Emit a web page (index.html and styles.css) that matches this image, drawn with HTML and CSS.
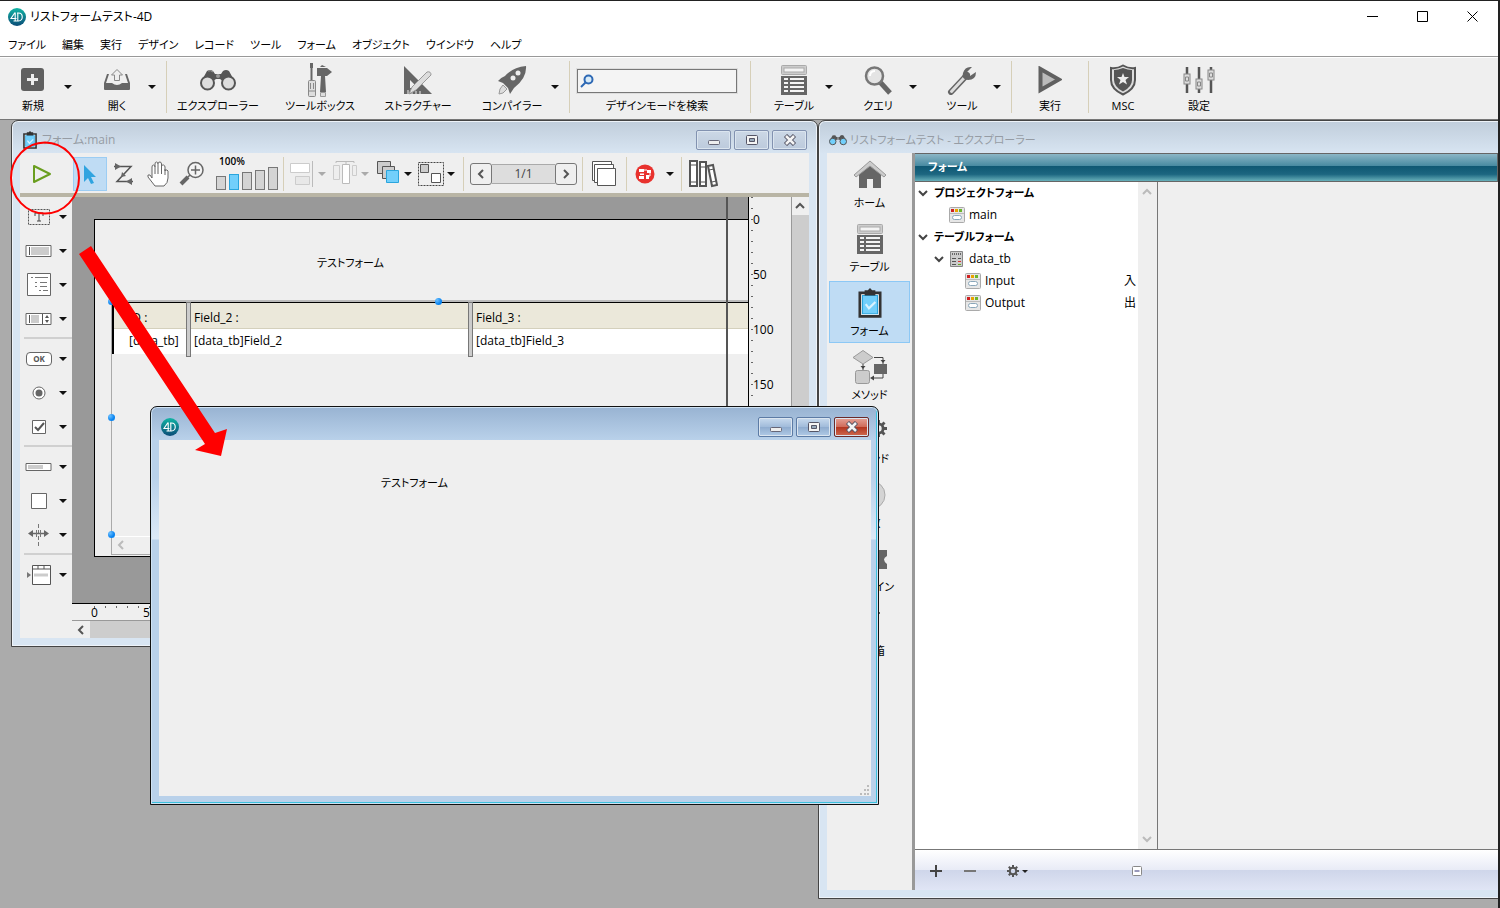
FILE: index.html
```html
<!DOCTYPE html>
<html lang="ja">
<head>
    <meta charset="UTF-8">
    <title>リストフォームテスト-4D</title>
    <link rel="stylesheet" href="styles.css">
</head>
<body>
<!-- 共通アイコン -->
<svg class="defs" width="0" height="0">
    <linearGradient id="logoFill" x1="0" y1="0" x2="0" y2="1"><stop offset="0" stop-color="#11b5a4"/><stop offset="1" stop-color="#0b4c78"/></linearGradient>
    <symbol id="logo" viewBox="0 0 18 18">
        <circle cx="9" cy="9" r="9" fill="url(#logoFill)"/>
        <path d="M7 4.500L3 10.500h5.500M7.200 4.500v8.500M5.500 13h5c5 0 5-8 0-8h-1.500M9.800 5v8" fill="none" stroke="#fff" stroke-width="1.100"/>
    </symbol>
    <symbol id="table" viewBox="0 0 28 32">
        <rect x="1.500" y="1.500" width="25" height="9" rx="1" fill="#ccc" stroke="#aaa"/><rect x="4" y="4" width="20" height="4" fill="#f4f4f4" stroke="#aaa"/>
        <path d="M1 12h26v19H1z" fill="#666"/>
        <path d="M4 15h4M10 15h14M4 19h4M10 19h14M4 23h4M10 23h14M4 27h4M10 27h14" stroke="#f4f4f4" stroke-width="2"/>
    </symbol>
    <symbol id="clip" viewBox="0 0 22 28">
        <path d="M1.500 4.500h19v22h-19z" fill="#fff" stroke="#333" stroke-width="2.500"/><path d="M4 7h14v17H4z" fill="#72cffb" stroke="#2aa5dd"/>
        <path d="M6 2h3l2-2 2 2h3v5H6z" fill="#333"/><path d="M7 15l3 4 6-6" fill="none" stroke="#d8f2ff" stroke-width="2"/>
    </symbol>
    <symbol id="bino" viewBox="0 0 36 22">
        <path d="M1 13L7 2q3-2 6 0l2 3h6l2-3q3-2 6 0l6 11-8 2-7-5h-4l-7 5z" fill="#555"/>
        <path d="M8 2q3-1 5 1" stroke="#999" fill="none"/><circle cx="18" cy="7" r="2" fill="#999"/>
        <circle cx="7.500" cy="14" r="6.500" class="lens"/><circle cx="28.500" cy="14" r="6.500" class="lens"/>
    </symbol>
    <symbol id="formIcon" viewBox="0 0 16 16">
        <rect x=".5" y=".5" width="15" height="15" rx="1" fill="#e6e6e6" stroke="#aaa"/>
        <path d="M2 2h3v3H2z" fill="#d02020"/><path d="M6 2h3v3H6z" fill="#e8a300"/><path d="M10 2h3v3h-3z" fill="#6bb52c"/>
        <path d="M1 6.500h14" stroke="#bbb"/><rect x="3.500" y="8.500" width="9" height="4" rx="2" fill="#fff" stroke="#8aa7ba"/>
    </symbol>
    <symbol id="gear" viewBox="0 0 24 24">
        <circle cx="12" cy="12" r="6.500" fill="none" stroke="#555" stroke-width="4"/>
        <path d="M12 0v5M12 19v5M0 12h5M19 12h5M3.500 3.500L7 7M17 17l3.500 3.500M3.500 20.500L7 17M17 7l3.500-3.500" stroke="#555" stroke-width="4"/>
    </symbol>
    <symbol id="wMin" viewBox="0 0 14 12"><rect x="1.500" y="6.500" width="11" height="4" rx="1" fill="#eee" stroke="#667"/></symbol>
    <symbol id="wMax" viewBox="0 0 14 12"><rect x="1.500" y="1.500" width="11" height="9" rx="1" fill="#f4f4f4" stroke="#556"/><path d="M4.500 4.500h5v3h-5z" fill="#9ab" stroke="#556"/></symbol>
    <symbol id="wClose" viewBox="0 0 14 12"><path d="M2.500 1.500l9 9M11.500 1.500l-9 9" stroke="#556" stroke-width="4.500"/><path d="M3 2l8 8M11 2l-8 8" stroke="#f4f4f4" stroke-width="2.500"/></symbol>
    <symbol id="chevL" viewBox="0 0 10 12"><path d="M7 2L3 6l4 4" fill="none" stroke="currentColor" stroke-width="2"/></symbol>
    <symbol id="chevR" viewBox="0 0 10 12"><path d="M3 2l4 4-4 4" fill="none" stroke="currentColor" stroke-width="2"/></symbol>
    <symbol id="chevU" viewBox="0 0 12 10"><path d="M2 7l4-4 4 4" fill="none" stroke="currentColor" stroke-width="2"/></symbol>
    <symbol id="chevD" viewBox="0 0 12 10"><path d="M2 3l4 4 4-4" fill="none" stroke="currentColor" stroke-width="2"/></symbol>
</svg>

<div class="app">
    <header class="titlebar">
        <svg class="logo"><use href="#logo"/></svg>
        <span>リストフォームテスト-4D</span>
        <div class="sysBtns">
            <button aria-label="最小化"><svg width="12" height="12"><path d="M0 5.500h11" stroke="#000"/></svg></button>
            <button aria-label="最大化"><svg width="12" height="12"><path d="M.5.5h10v10H.5z" fill="none" stroke="#000"/></svg></button>
            <button aria-label="閉じる"><svg width="12" height="12"><path d="M.5.5l10 10M10.500.5l-10 10" stroke="#000"/></svg></button>
        </div>
    </header>
    <nav class="menubar">
        <button>ファイル</button><button>編集</button><button>実行</button><button>デザイン</button><button>レコード</button><button>ツール</button><button>フォーム</button><button>オブジェクト</button><button>ウインドウ</button><button>ヘルプ</button>
    </nav>

    <!-- メインツールバー -->
    <div class="toolbar">
        <div class="group first">
            <div class="split">
                <button class="tool w50"><svg width="24" height="24"><rect x="0" y="0" width="23" height="23" rx="3" fill="#606060"/><path d="M11.500 6v11M6 11.500h11" stroke="#eee" stroke-width="3"/></svg>新規</button>
                <button class="drop" aria-label="新規メニュー"></button>
            </div>
            <div class="split">
                <button class="tool w50"><svg width="28" height="24"><path d="M4 6L1 15v6q0 1 1 1h24q1 0 1-1v-6l-3-9-2 0 3 9h-6q-5 4-10 0H3l3-9z" fill="#666"/><path d="M11.500 12.500V7H8.500L14 1.500 19.500 7h-3v5.500z" fill="#eee" stroke="#888"/></svg>開く</button>
                <button class="drop" aria-label="開くメニュー"></button>
            </div>
        </div>
        <div class="group">
            <button class="tool w102"><svg width="36" height="22"><use href="#bino"/></svg>エクスプローラー</button>
            <button class="tool w102"><svg width="28" height="36"><path d="M5.500 1v18" stroke="#666" stroke-width="2"/><path d="M4 1h3v5H4z" fill="#666"/><rect x="2.500" y="18.500" width="7" height="16" rx="1" fill="#ddd" stroke="#888"/><path d="M4.500 21v6M7.500 21v6M3 29h6" stroke="#888"/><path d="M11 6h10l5 4-5 4H11z" fill="#666"/><path d="M16 3l4 2h-6z" fill="#666"/><path d="M15 14h4l1 16h-6z" fill="#666"/><path d="M14.500 30.500h5v4h-5z" fill="#ddd" stroke="#999"/></svg>ツールボックス</button>
            <button class="tool w94"><svg width="32" height="32"><path d="M2 2l28 28H2zM8 16v8h8z" fill="#666" fill-rule="evenodd"/><path d="M6 26v4M10 27v3M14 27v3M18 27v3" stroke="#eee"/><path d="M7 30l3-7L25 8q4-1 4 3L14 26z" fill="#ddd" stroke="#999"/></svg>ストラクチャー</button>
            <div class="split">
                <button class="tool w66"><svg width="30" height="30"><path d="M29 1q1 12-12 22l-4 6-2-6-5-5-5-2q2-3 7-5Q16 2 29 1z" fill="#666"/><circle cx="21" cy="8" r="2.500" fill="#eee"/><circle cx="16" cy="13" r="2.500" fill="#eee"/><path d="M6 20l4 4-4 4-4 1 1-5z" fill="#ddd" stroke="#999"/></svg>コンパイラー</button>
                <button class="drop" aria-label="コンパイラーメニュー"></button>
            </div>
        </div>
        <div class="group search">
            <div class="searchBox">
                <svg width="14" height="14"><circle cx="8.500" cy="5.500" r="4" fill="#d8ebf8" stroke="#2d68b4" stroke-width="2"/><path d="M5.500 8.500L1 13" stroke="#2d68b4" stroke-width="2"/></svg>
                <input type="search" id="q">
            </div>
            <label for="q">デザインモードを検索</label>
        </div>
        <div class="group tables">
            <div class="split">
                <button class="tool w50"><svg width="28" height="32"><use href="#table"/></svg>テーブル</button>
                <button class="drop" aria-label="テーブルメニュー"></button>
            </div>
            <div class="split">
                <button class="tool w50"><svg width="28" height="30"><path d="M16 17l10 11" stroke="#666" stroke-width="5"/><circle cx="10.500" cy="11" r="8.500" fill="#e4e4e4" stroke="#777" stroke-width="2.500"/><path d="M6 11q0-5 5-5" fill="none" stroke="#fff" stroke-width="2"/></svg>クエリ</button>
                <button class="drop" aria-label="クエリメニュー"></button>
            </div>
            <div class="split">
                <button class="tool w50"><svg width="30" height="30"><path d="M20 10L4 27" stroke="#666" stroke-width="6" stroke-linecap="round"/><path d="M17 13L4.500 26.500" stroke="#ddd" stroke-width="3" stroke-linecap="round"/><path d="M25 2l-5 5 0 3 3 1 6-4q0 8-8 8-7-1-5-7 2-7 9-6z" fill="#666"/></svg>ツール</button>
                <button class="drop" aria-label="ツールメニュー"></button>
            </div>
        </div>
        <div class="group">
            <button class="tool w76"><svg width="24" height="28"><path d="M2.500 3v21L21 13.500z" fill="#bbb" stroke="#606060" stroke-width="4"/></svg>実行</button>
        </div>
        <div class="group">
            <button class="tool w68"><svg width="28" height="32"><path d="M14 1.500q6 3.500 12 2.500v12q0 9-12 14.500Q2 25 2 16V4q6 1 12-2.500z" fill="#ddd" stroke="#555" stroke-width="2"/><path d="M14 4q5 2 9 2v10q0 7-9 11.500Q5 23 5 16V6q4 0 9-2z" fill="#555"/><path d="M14 9l1.500 4H20l-3.500 3 1.500 4.500-4-2.500-4 2.500 1.500-4.500L8 13h4.500z" fill="#eee"/></svg>MSC</button>
            <button class="tool w84"><svg width="32" height="30"><path d="M4 2v26M16 2v26M28 2v26" stroke="#555" stroke-width="2.500"/><g fill="#ddd" stroke="#888"><rect x="1" y="9" width="6" height="10"/><rect x="13" y="14" width="6" height="10"/><rect x="25" y="5" width="6" height="10"/><path d="M2.500 12h3v4h-3zM14.500 17h3v4h-3zM26.500 8h3v4h-3z"/></g></svg>設定</button>
        </div>
    </div>

    <main class="desktop">
        <!-- フォームエディタ -->
        <section class="window editor">
            <div class="winTitle">
                <svg width="14" height="18"><use href="#clip"/></svg>
                <span>フォーム:main</span>
                <div class="winBtns">
                    <button aria-label="最小化"><svg><use href="#wMin"/></svg></button>
                    <button aria-label="最大化"><svg><use href="#wMax"/></svg></button>
                    <button aria-label="閉じる"><svg><use href="#wClose"/></svg></button>
                </div>
            </div>
            <div class="editTools">
                <button class="play" aria-label="フォーム実行"><svg width="22" height="22"><path d="M3 3v16l16-8z" fill="none" stroke="#6a9e1f" stroke-width="2" stroke-linejoin="round"/></svg></button>
                <button class="on" aria-label="選択"><svg width="16" height="22"><path d="M2 2v17l4-4 3 6 3-1-3-6h5z" fill="#2fa4e0"/></svg></button>
                <button aria-label="入力順"><svg width="22" height="22"><path d="M1 3.500h17L4 18.500h16" fill="none" stroke="#555" stroke-width="1.500"/><path d="M8 3.500L2 0v7zM13 18.500l6-3.500v7zM8 14l1-5 4 4z" fill="#666"/></svg></button>
                <button aria-label="移動"><svg width="24" height="26"><path d="M6 17V6q0-2 1.500-2T9 6V3q0-2 1.500-2T12 3V2.500Q12.500.8 14 1t1.500 2v2q.5-1.500 2-1T19 6v4q.5-1.500 2-1t1 3v5q0 5-4 8H9L2 16q-1-3 2-2z" fill="#fff" stroke="#666"/><path d="M9 6v7M12 3v10M15.500 4v9M19 8v6" stroke="#666"/></svg></button>
                <button aria-label="拡大"><svg width="26" height="26"><circle cx="16.500" cy="9" r="7.500" fill="#f4f4f4" stroke="#666" stroke-width="1.500"/><path d="M12 9h9M16.500 4.500v9M11 14l-3 3" stroke="#666" stroke-width="1.500"/><path d="M9 16l-7 7" stroke="#666" stroke-width="4"/></svg></button>
                <div class="zoom">
                    <span>100%</span>
                    <div class="bars"><i class="h14"></i><i class="h16 cur"></i><i class="h18"></i><i class="h20"></i><i class="h22"></i></div>
                </div>
                <div class="set">
                    <div class="pair dim"><button aria-label="整列"><svg width="26" height="28"><path d="M1.500 3.500h19v9h-19z" fill="#fff" stroke="#ccc"/><path d="M6.500 16.500h14v8h-14z" fill="#e8e8e8" stroke="#ccc"/><path d="M23.500 1v26" stroke="#bbb"/></svg></button><button class="drop" aria-label="整列メニュー"></button></div>
                    <div class="pair dim"><button aria-label="均等配置"><svg width="26" height="28"><path d="M1.500 5.500h6v14h-6zM20.500 5.500h4v10h-4z" fill="#eee" stroke="#ccc"/><path d="M10.500 4.500h7v19h-7z" fill="#fff" stroke="#bbb"/><path d="M4 3V1.500h18V3M14 1v3" fill="none" stroke="#bbb"/></svg></button><button class="drop" aria-label="均等配置メニュー"></button></div>
                    <div class="pair"><button aria-label="重なり"><svg width="26" height="28"><g fill="#ccc" stroke="#555"><path d="M2.500 1.500h13v12h-13z"/><path d="M7.500 6.500h12v12h-12z"/></g><path d="M11.500 10.500h12v12h-12z" fill="#72cffb" stroke="#2aa5dd"/></svg></button><button class="drop" aria-label="重なりメニュー"></button></div>
                    <div class="pair"><button aria-label="グループ"><svg width="28" height="28"><path d="M1.500 2.500h25v23h-25z" fill="none" stroke="#444" stroke-dasharray="2 1"/><path d="M3.500 4.500h8v8h-8z" fill="#ccc" stroke="#555"/><path d="M14.500 13.500h9v9h-9z" fill="#fff" stroke="#555"/></svg></button><button class="drop" aria-label="グループメニュー"></button></div>
                </div>
                <div class="set pager">
                    <button aria-label="前のページ"><svg width="10" height="12"><use href="#chevL"/></svg></button>
                    <span>1/1</span>
                    <button aria-label="次のページ"><svg width="10" height="12"><use href="#chevR"/></svg></button>
                </div>
                <div class="set flat"><button class="w42" aria-label="ビュー"><svg width="26" height="28"><g fill="#fff" stroke="#555"><path d="M1.500 1.500h19v19h-19z"/><path d="M3.500 4.500h19v18h-19z"/><path d="M6.500 8.500h18v17h-18z"/></g></svg></button></div>
                <div class="set flat">
                    <div class="pair macro"><button class="w36" aria-label="マクロ"><svg width="20" height="20"><circle cx="10" cy="10" r="9.500" fill="#e8322e"/><path d="M4 5h5v3H4zM4 12h5v3H4zM12 6h4v3h-4zM5 9.500h4v1.500H5zM11 11h3v4h-3z" fill="#fff"/><path d="M9 6h3M15 9v3h-4" stroke="#fff" fill="none"/></svg></button><button class="drop" aria-label="マクロメニュー"></button></div>
                </div>
                <div class="set flat"><button class="w42" aria-label="ライブラリ"><svg width="30" height="28"><g fill="#fff" stroke="#555" stroke-width="2"><path d="M2 1h7v25H2z"/><path d="M12 2h6v24h-6z"/><path d="M20 6l5-1 4 20-5 1z"/></g><path d="M2 5h7M2 22h7M12 7h6M12 22h6M21 10l5-1M24 22l4-1" stroke="#555"/></svg></button></div>
            </div>
            <div class="editBody">
                <div class="palette">
                    <div class="palGroup">
                        <div class="palRow"><button aria-label="テキスト"><svg width="24" height="18"><path d="M1.500 1.500h21v15h-21z" fill="#eee" stroke="#555" stroke-dasharray="2 1"/><path d="M8 5h8v3M8 8V5M12 5v8M10 13h4" stroke="#444" fill="none"/></svg></button><button class="drop" aria-label="テキストメニュー"></button></div>
                        <div class="palRow"><button aria-label="入力"><svg width="28" height="14"><path d="M1 1.500h25v11H1z" fill="#fff" stroke="#666"/><path d="M6 3h18v8H6z" fill="#ccc"/><path d="M4.500 3v8" stroke="#555"/></svg></button><button class="drop" aria-label="入力メニュー"></button></div>
                        <div class="palRow"><button aria-label="リスト"><svg width="26" height="24"><path d="M1.500.5h23v22h-23z" fill="#fff" stroke="#666"/><path d="M5 4.500h2M9 4.500h13M9 9.500h2M14 9.500h7M9 13.500h2M14 13.500h7M13 17.500h2M17 17.500h5" stroke="#777"/></svg></button><button class="drop" aria-label="リストメニュー"></button></div>
                        <div class="palRow"><button aria-label="コンボ"><svg width="28" height="14"><path d="M1 1.500h25v11H1z" fill="#fff" stroke="#666"/><path d="M6 3h8v8H6z" fill="#ccc"/><path d="M4.500 3v8M17.500 2v10" stroke="#555"/><path d="M20 6h4L22 3zM20 8h4L22 11z" fill="#555"/></svg></button><button class="drop" aria-label="コンボメニュー"></button></div>
                    </div>
                    <div class="palGroup">
                        <div class="palRow"><button aria-label="ボタン"><span class="okIcon">OK</span></button><button class="drop" aria-label="ボタンメニュー"></button></div>
                        <div class="palRow"><button aria-label="ラジオ"><svg width="14" height="14"><circle cx="7" cy="7" r="6" fill="#fff" stroke="#666"/><circle cx="7" cy="7" r="3.500" fill="#666"/></svg></button><button class="drop" aria-label="ラジオメニュー"></button></div>
                        <div class="palRow"><button aria-label="チェック"><svg width="16" height="16"><path d="M1.500 1.500h13v13h-13z" fill="#fff" stroke="#666"/><path d="M4 8l3 3 6-7" fill="none" stroke="#555" stroke-width="2"/></svg></button><button class="drop" aria-label="チェックメニュー"></button></div>
                    </div>
                    <div class="palGroup">
                        <div class="palRow"><button aria-label="進捗"><svg width="28" height="10"><path d="M1 1.500h25v7H1z" fill="#fff" stroke="#666"/><path d="M3 3h15v4H3z" fill="#ccc"/></svg></button><button class="drop" aria-label="進捗メニュー"></button></div>
                        <div class="palRow"><button aria-label="図形"><svg width="16" height="16"><path d="M.5.5h15v15H.5z" fill="#fff" stroke="#666"/></svg></button><button class="drop" aria-label="図形メニュー"></button></div>
                        <div class="palRow"><button aria-label="スプリッター"><svg width="22" height="22"><path d="M10.500 0v22" stroke="#777" stroke-dasharray="4 2"/><path d="M3 9.500h16" stroke="#666" stroke-width="1.500"/><path d="M8.500 6v7M12.500 6v7" stroke="#777"/><path d="M0 9.500L5 6v7zM21 9.500L16 6v7z" fill="#666"/></svg></button><button class="drop" aria-label="スプリッターメニュー"></button></div>
                    </div>
                    <div class="palGroup">
                        <div class="palRow"><button aria-label="プラグイン"><svg width="26" height="22"><path d="M6.500 1.500h18v19h-18zM6.500 5h18M12 1v4M18 1v4" fill="#fff" stroke="#555"/><path d="M8 11h14" stroke="#ccc" stroke-width="3"/><path d="M1 8l4 3-4 3z" fill="#777"/></svg></button><button class="drop" aria-label="プラグインメニュー"></button></div>
                    </div>
                </div>
                <div class="canvasArea">
                    <div class="canvasRow">
                        <div class="canvas">
                            <div class="page">
                                <span class="formText">テストフォーム</span>
                                <div class="listbox">
                                    <table>
                                        <thead><tr><th class="cId">ID :</th><th class="c2">Field_2 :</th><th>Field_3 :</th></tr></thead>
                                        <tbody><tr><td class="cId">[data_tb]</td><td class="c2">[data_tb]Field_2</td><td>[data_tb]Field_3</td></tr></tbody>
                                    </table>
                                    <i class="colSep s1"></i><i class="colSep s2"></i>
                                    <div class="lbScroll"><svg width="10" height="12"><use href="#chevL"/></svg></div>
                                    <i class="handle p1"></i><i class="handle p2"></i><i class="handle p3"></i><i class="handle p4"></i>
                                </div>
                            </div>
                            <i class="limit"></i>
                        </div>
                        <div class="vruler"><span>0</span><span>50</span><span>100</span><span>150</span><span>200</span><span>250</span><span>300</span></div>
                        <div class="vscroll"><button aria-label="上へ"><svg width="12" height="10"><use href="#chevU"/></svg></button></div>
                    </div>
                    <div class="hruler"><span>0</span><span>50</span><span>100</span><span>150</span></div>
                    <div class="hscroll"><button aria-label="左へ"><svg width="10" height="12"><use href="#chevL"/></svg></button></div>
                </div>
            </div>
        </section>

        <!-- エクスプローラー -->
        <section class="window explorer">
            <div class="winTitle">
                <svg class="blue" width="18" height="12"><use href="#bino"/></svg>
                <span>リストフォームテスト - エクスプローラー</span>
            </div>
            <div class="exBody">
                <nav class="exNav">
                    <button><svg width="34" height="30"><path d="M6 14l11-9 11 9v14h-8v-9h-6v9H6z" fill="#666"/><path d="M1 15L17 1l16 14-2 2L17 6 3 17z" fill="#ccc" stroke="#999"/></svg>ホーム</button>
                    <button><svg width="28" height="32"><use href="#table"/></svg>テーブル</button>
                    <button class="on"><svg width="24" height="30"><use href="#clip"/></svg>フォーム</button>
                    <button><svg width="36" height="34"><path d="M11 .5L21 7.500 11 14 1 7.500z" fill="#ccc" stroke="#999"/><path d="M22 7.500h9V14M31 24v4H20M11 14v6" fill="none" stroke="#444"/><path d="M22 14h13v10H22z" fill="#666"/><rect x="3.500" y="20.500" width="14" height="13" rx="2" fill="#ccc" stroke="#999"/><path d="M18 28l4-2.500v5zM31 13l-2.500-3h5zM11 19l-2.500-3h5z" fill="#444"/></svg>メソッド</button>
                    <button><svg width="36" height="26"><path d="M1 2h18v20H1z" fill="#ccc"/><use href="#gear" x="18" y="2" width="17" height="17"/></svg>コマンド</button>
                    <button><svg width="34" height="30"><circle cx="18" cy="15" r="14" fill="#d4d4d4" stroke="#aaa"/></svg>定数</button>
                    <button><svg width="36" height="26"><path d="M4 4h9q4 5 8 0h14v6q-6 3 0 8v5H4z" fill="#666"/></svg>プラグイン</button>
                    <button><svg width="22" height="28"><path d="M3 5h16l-2 22H5z" fill="#999"/><path d="M1 4h20" stroke="#666" stroke-width="2"/></svg>ゴミ箱</button>
                </nav>
                <div class="exMain">
                    <h2>フォーム</h2>
                    <div class="exSplit">
                        <ul class="tree">
                            <li class="root"><svg width="12" height="10"><use href="#chevD"/></svg><b>プロジェクトフォーム</b></li>
                            <li class="lv1"><svg width="16" height="16"><use href="#formIcon"/></svg>main</li>
                            <li class="root"><svg width="12" height="10"><use href="#chevD"/></svg><b>テーブルフォーム</b></li>
                            <li class="tb"><svg width="12" height="10"><use href="#chevD"/></svg><svg width="16" height="16"><path d="M1.500.5h12v15h-12z" fill="#ccc" stroke="#888"/><path d="M3 3h9" stroke="#666" stroke-width="2" stroke-dasharray="1 1"/><path d="M3 7.500h4M3 10.500h4M3 13.500h4M9 7.500h3" stroke="#555"/><path d="M9 10.500h3" stroke="#d33"/><path d="M9 13.500h3" stroke="#6a2"/></svg>data_tb</li>
                            <li class="lv2"><svg width="16" height="16"><use href="#formIcon"/></svg>Input<em>入</em></li>
                            <li class="lv2"><svg width="16" height="16"><use href="#formIcon"/></svg>Output<em>出</em></li>
                        </ul>
                        <div class="treeScroll"><svg width="12" height="10"><use href="#chevU"/></svg><svg width="12" height="10"><use href="#chevD"/></svg></div>
                        <div class="preview"></div>
                    </div>
                    <div class="exFoot">
                        <button aria-label="追加"><svg width="12" height="12"><path d="M6 0v12M0 6h12" stroke="#444" stroke-width="2"/></svg></button>
                        <button aria-label="削除"><svg width="12" height="12"><path d="M0 6h12" stroke="#777" stroke-width="2"/></svg></button>
                        <button class="opt" aria-label="オプション"><svg width="12" height="12"><use href="#gear"/></svg><i></i></button>
                        <button class="fold" aria-label="プレビュー"><svg width="10" height="10"><rect x=".5" y=".5" width="9" height="9" rx="1" fill="#fff" stroke="#888"/><path d="M2.500 5h5" stroke="#337"/></svg></button>
                    </div>
                </div>
            </div>
        </section>

        <!-- 実行中のフォーム -->
        <section class="window dialog">
            <div class="winTitle">
                <svg width="18" height="18"><use href="#logo"/></svg>
                <div class="winBtns">
                    <button aria-label="最小化"><svg><use href="#wMin"/></svg></button>
                    <button aria-label="最大化"><svg><use href="#wMax"/></svg></button>
                    <button class="close" aria-label="閉じる"><svg><use href="#wClose"/></svg></button>
                </div>
            </div>
            <div class="dlgBody">
                <span class="formText">テストフォーム</span>
                <svg class="grip" width="10" height="10"><path d="M8 1h2M5 5h2M8 5h2M1 9h2M5 9h2M8 9h2" stroke="#bbb" stroke-width="2"/></svg>
            </div>
        </section>

        <!-- 注釈 -->
        <svg class="note" width="240" height="340">
            <ellipse cx="45" cy="58" rx="34" ry="35.500" fill="none" stroke="#f00" stroke-width="2"/>
            <path d="M79 134l12-8 124 187 12-4-6 27-26-6 10-6z" fill="#f00"/>
        </svg>
    </main>
</div>
</body>
</html>
```

FILE: styles.css
```css
*{box-sizing:border-box;}
body{
    margin:0;color:#000;
    font:11px/16px "Open Sans","Noto Sans CJK JP",sans-serif;
    font-feature-settings:"palt";
}
button{
    margin:0;padding:0;border:0;background:none;
    font:inherit;color:inherit;
    font-feature-settings:inherit;
}
svg{display:block;flex:none;}
.defs{position:absolute;}
.app{
    height:100vh;display:flex;flex-direction:column;
    border-top:1px solid #222;border-right:2px solid #222;
    background:#fff;overflow:hidden;
}

/* タイトル・メニュー */
.titlebar{
    display:flex;align-items:center;height:32px;flex:none;
    padding-left:8px;gap:4px;font-size:12px;
}
.logo{width:18px;height:18px;}
.sysBtns{margin-left:auto;display:flex;}
.sysBtns button{width:50px;height:30px;display:flex;align-items:center;justify-content:center;}
.menubar{
    display:flex;gap:16px;padding:0 8px;
    height:23px;flex:none;align-items:center;
}

/* メインツールバー */
.toolbar{
    display:flex;height:64px;flex:none;padding:4px 0 6px;
    background:#efefef;border-top:1px solid #999;border-bottom:1px solid #777;
    box-shadow:inset 0 1px #fff;
}
.group{
    display:flex;border-right:1px solid #d6cfb8;
}
.group:last-child{border:0;}
.first{padding-left:8px;padding-right:4px;}
.split{display:flex;}
.split+.split,.tool+.split{margin-left:14px;}
.tool{
    display:flex;flex-direction:column;align-items:center;
    justify-content:flex-end;line-height:14px;white-space:nowrap;
}
.tool svg{margin:auto;}
.w50{width:50px;}
.w66{width:66px;}
.w68{width:68px;}
.w76{width:76px;}
.w84{width:84px;}
.w94{width:94px;}
.w102{width:102px;}
.drop{width:20px;display:flex;align-items:center;justify-content:center;}
.drop:before{
    content:"";border:4px solid transparent;
    border-top-color:#111;border-bottom:0;
}
.tool.w66+.drop{margin-right:4px;}
.search{
    flex-direction:column;align-items:center;justify-content:space-between;
    padding:8px 13px 0 7px;line-height:14px;
}
.searchBox{
    display:flex;align-items:center;gap:4px;width:160px;height:24px;
    padding-left:2px;background:#f4f4f4;border:1px solid #777;
    box-shadow:0 0 0 1px #ddd;
}
.searchBox input{
    flex:1;min-width:0;height:20px;border:0;padding:0;
    background:none;font:inherit;
}
.tables{padding:0 4px 0 18px;}
.lens{fill:var(--lens,#ddd);stroke:#555;stroke-width:2;}

/* ウィンドウ */
.desktop{
    position:relative;flex:1;overflow:hidden;
    background:#ababab;
}
.window{
    position:absolute;display:flex;flex-direction:column;
    border:1px solid #444;border-radius:7px 7px 0 0;
    padding:0 8px 8px 8px;
    background:linear-gradient(#c0cddb,#d8e5f2 33px,#d8e5f2);
    box-shadow:inset 0 0 0 1px #eef3f9;
}
.winTitle{
    display:flex;align-items:center;gap:5px;height:32px;flex:none;
    padding:6px 2px 0 3px;color:#969ca4;font-size:12px;
}
.winBtns{display:flex;gap:3px;margin-left:auto;}
.winBtns button{
    width:35px;height:20px;display:flex;align-items:center;justify-content:center;
    border:1px solid #8292b0;border-radius:2px;
    background:linear-gradient(#ccd8e6,#bccadc);
    box-shadow:inset 0 0 0 1px #dbe5ef;
}
.winBtns svg{width:14px;height:12px;}

/* フォームエディタ */
.editor{left:11px;top:0;width:807px;height:527px;z-index:1;}
.editTools{
    display:flex;align-items:center;height:44px;flex:none;padding-top:2px;
    background:#efefef;border-bottom:4px solid #b9b5a5;
}
.editTools button{
    display:flex;align-items:center;justify-content:center;
    width:34px;height:34px;
}
.editTools .play{width:53px;padding-right:10px;}
.editTools .on{background:#bfdcf4;border:1px solid #9ccdf3;}
.zoom{
    width:74px;height:38px;padding-left:7px;
    display:flex;flex-direction:column;justify-content:space-between;
}
.zoom span{font-size:10px;line-height:12px;font-weight:600;padding-left:3px;}
.bars{display:flex;align-items:flex-end;gap:3px;padding-bottom:5px;}
.bars i{width:10px;background:#d4d4d4;border:1px solid #777;}
.bars .cur{background:#72cffb;border-color:#2aa5dd;}
.h14{height:14px;}
.h16{height:16px;}
.h18{height:18px;}
.h20{height:20px;}
.h22{height:23px;}
.set{
    display:flex;align-items:center;height:34px;padding:0 2px 0 5px;
    border-right:1px solid #d6cfb8;
}
.zoom+.set{border-left:1px solid #d6cfb8;}
.set:last-child{border:0;}
.pair{display:flex;width:43px;}
.editTools .pair button{width:26px;}
.editTools .pair .drop{width:14px;}
.dim .drop:before{border-top-color:#aaa;}
.pager{padding-right:5px;padding-left:6px;}
.editTools .pager button{
    width:22px;height:22px;border:1px solid #777;border-radius:3px;color:#555;
}
.pager span{
    width:63px;height:20px;line-height:18px;text-align:center;color:#444;font-size:12px;
    background:#ddd;border:1px solid #aaa;border-width:1px 0;
}
.flat{padding:0 1px 0 0;}
.editTools .w42{width:42px;}
.editTools .pair .w36{width:36px;}
.editTools .macro{width:53px;}

.editBody{flex:1;display:flex;min-height:0;}
.palette{width:52px;background:#efefef;padding:3px 0 0 4px;}
.palGroup{padding-bottom:1px;}
.palGroup+.palGroup{border-top:2px solid #d0d0d0;padding-top:3px;}
.palRow{display:flex;height:34px;}
.palRow button{width:30px;display:flex;align-items:center;justify-content:center;}
.palRow .drop{width:18px;}
.okIcon{
    width:26px;height:14px;border:1px solid #666;border-radius:4px;background:#fff;
    font-size:8px;font-weight:700;line-height:12px;color:#555;
}
.canvasArea{flex:1;min-width:0;display:flex;flex-direction:column;}
.canvasRow{flex:1;display:flex;min-height:0;}
.canvas{position:relative;flex:1;overflow:hidden;background:#999;}
.page{
    position:absolute;left:22px;top:22px;right:-10px;height:338px;
    background:#efefef;border:1px solid #000;
}
.formText{position:absolute;left:222px;top:35px;}
.listbox{
    position:absolute;left:16px;top:82px;right:0;height:253px;font-size:12px;
    border-left:1px solid #aaa;border-bottom:1px solid #aaa;
    border-top:1px solid #000;box-shadow:0 -2px #bbb;
}
.listbox table{width:100%;border-collapse:collapse;table-layout:fixed;}
.listbox th,.listbox td{padding:0 4px;text-align:left;font-weight:400;white-space:nowrap;}
.listbox th{height:25px;padding-top:5px;background:#ebe8da;border-bottom:1px solid #d4d0bc;}
.listbox td{height:26px;background:#fff;}
.listbox .cId{width:77px;padding-left:15px;border-left:2px solid #000;}
.listbox .c2{width:282px;}
.colSep{
    position:absolute;top:-1px;width:5px;height:55px;
    background:#ccc;border:1px solid #777;
}
.s1{left:74px;}
.s2{left:356px;}
.lbScroll{
    position:absolute;left:0;right:0;bottom:0;height:18px;padding:2px 4px;
    border-top:1px solid #fff;color:#bbb;
}
.handle{
    position:absolute;width:7px;height:7px;border-radius:50%;
    background:radial-gradient(circle at 30% 30%,#6cc0ff,#0a84f0 60%);
}
.p1{left:-4px;top:-5px;}
.p2{left:323px;top:-5px;}
.p3{left:-4px;top:111px;}
.p4{left:-4px;top:228px;}
.limit{position:absolute;left:654px;top:0;bottom:0;width:2px;background:#555;}
.vruler{
    width:43px;padding:15px 0 0 4px;overflow:hidden;font-size:12px;
    border-left:1px solid #000;
    background:repeating-linear-gradient(#666 0 1px,transparent 1px 11px) 2px 0/2px 100% no-repeat,#efefef;
}
.vruler span{display:block;height:55px;}
.vscroll{width:18px;background:#cdcdcd;border-left:1px solid #999;}
.vscroll button{width:17px;height:18px;padding-left:2px;background:#efefef;color:#555;}
.hruler{
    display:flex;height:17px;flex:none;padding-left:19px;font-size:12px;
    border-top:1px solid #000;
    background:repeating-linear-gradient(90deg,#666 0 1px,transparent 1px 11px) 22px 2px/100% 2px no-repeat,#efefef;
}
.hruler span{width:52px;line-height:18px;flex:none;}
.hscroll{height:18px;flex:none;background:#cdcdcd;border-top:1px solid #999;}
.hscroll button{width:18px;height:17px;padding-left:4px;background:#efefef;color:#555;}

/* エクスプローラー */
.explorer{left:818px;top:0;right:-9px;bottom:9px;z-index:2;}
.explorer .winTitle{padding-left:2px;gap:3px;font-size:11px;}
.blue{--lens:#72cffb;}
.exBody{flex:1;display:flex;min-height:0;background:#efefef;}
.exNav{width:85px;padding:0 2px;display:flex;flex-direction:column;gap:2px;}
.exNav button{
    height:62px;flex:none;display:flex;flex-direction:column;align-items:center;
    justify-content:flex-end;padding-bottom:3px;border:1px solid transparent;
}
.exNav svg{margin:auto;}
.exNav .on{background:#bfdcf4;border-color:#8cc8f5;}
.exMain{flex:1;display:flex;flex-direction:column;border-left:3px solid #999;min-width:0;}
.exMain h2{
    margin:0;height:29px;flex:none;padding:0 13px;
    font-size:11px;font-weight:600;line-height:26px;color:#fff;
    border:1px solid #666;border-left:0;
    background:linear-gradient(#8bb6c6,#4689a0 45%,#0f5873 46%,#1c6680 75%,#67b0ba);
}
.exSplit{flex:1;display:flex;min-height:0;}
.tree{
    width:223px;margin:0;padding:0;list-style:none;background:#fff;
    font-size:12px;
}
.tree li{display:flex;align-items:center;gap:4px;height:22px;padding-right:2px;}
.tree .root{padding-left:2px;gap:5px;}
.tree svg{color:#444;}
.tree b{font-size:11px;font-weight:600;}
.tree .lv1{padding-left:34px;}
.tree .tb{padding-left:18px;}
.tree .lv2{padding-left:50px;}
.tree em{margin-left:auto;font-style:normal;}
.treeScroll{
    width:20px;padding:5px 3px;border-right:1px solid #777;color:#bbb;
    display:flex;flex-direction:column;justify-content:space-between;
}
.exFoot{
    display:flex;align-items:center;gap:22px;height:41px;flex:none;padding:2px 0 0 15px;
    border-top:1px solid #777;
    background:linear-gradient(#fff,#e8ebf6 50%,#cfd6ea 51%,#e0e5f5);
}
.exFoot button{display:flex;align-items:center;gap:3px;}
.opt{margin-left:9px;}
.opt i{border:3px solid transparent;border-top-color:#222;border-bottom:0;}
.exFoot .fold{margin-left:82px;}

/* 実行ウィンドウ */
.dialog{
    left:150px;top:286px;width:729px;height:399px;z-index:3;
    padding-right:7px;
    border-color:#111;
    background:linear-gradient(#98b3d2,#b9d1ea 33px,#b9d1ea 70px,#dce9f7 132px,#b9d1ea 133px);
    box-shadow:inset 0 0 0 1px #cfe2f3,inset -2px -2px #3cc0dc;
}
.dialog .winTitle{height:33px;padding-left:2px;}
.dialog .winBtns button{border-color:#5c7ba5;background:linear-gradient(#c8daee,#a0bbda 50%,#8faccf 51%,#b0cae6);}
.dialog .winBtns .close{border-color:#6b2a2a;background:linear-gradient(#e5a297,#cf6a58 50%,#b3351f 51%,#cf6a50);}
.dlgBody{position:relative;flex:1;background:#efefef;}
.grip{position:absolute;right:2px;bottom:1px;}
.note{position:absolute;left:0;top:0;z-index:4;pointer-events:none;}
```
